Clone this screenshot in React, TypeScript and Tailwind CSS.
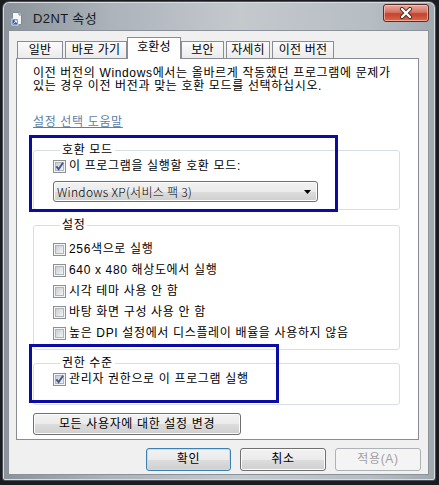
import React from "react";

const tabs = [
  { label: "일반", w: "w-[46px]", gap: "" },
  { label: "바로 가기", w: "w-[62px]", gap: "ml-[2px]" },
  { label: "호환성", w: "w-[54px]", gap: "", active: true },
  { label: "보안", w: "w-[43px]", gap: "" },
  { label: "자세히", w: "w-[44px]", gap: "ml-[2px]" },
  { label: "이전 버전", w: "w-[62px]", gap: "ml-[2px]" },
];

const settings = [
  "256색으로 실행",
  "640 x 480 해상도에서 실행",
  "시각 테마 사용 안 함",
  "바탕 화면 구성 사용 안 함",
  "높은 DPI 설정에서 디스플레이 배율을 사용하지 않음",
];

function CheckBox({ checked }: { checked?: boolean }) {
  return (
    <svg width="13" height="13" viewBox="0 0 13 13" className="shrink-0">
      <defs>
        <linearGradient id="cbFill" x1="0" y1="0" x2="1" y2="1">
          <stop offset="0" stopColor="#c6cbd1" />
          <stop offset="1" stopColor="#f6f6f6" />
        </linearGradient>
      </defs>
      <rect x="0.5" y="0.5" width="12" height="12" fill="#f5f5f5" stroke="#8e8f8f" />
      <rect x="2.5" y="2.5" width="8" height="8" fill="url(#cbFill)" stroke="#b1b5ba" />
      {checked && (
        <path d="M3.4 6.4 L5.6 9.2 L10 2.8" fill="none" stroke="#3f5592" strokeWidth="1.9" />
      )}
    </svg>
  );
}

function CheckRow({ label, checked }: { label: string; checked?: boolean }) {
  return (
    <div className="flex h-[13px] items-center gap-[3px] whitespace-nowrap leading-[13px]">
      <CheckBox checked={checked} />
      <span>{label}</span>
    </div>
  );
}

function WinButton({
  children,
  w,
  isDefault,
  disabled,
}: {
  children: React.ReactNode;
  w: string;
  isDefault?: boolean;
  disabled?: boolean;
}) {
  const base = "flex h-[23px] items-center justify-center rounded-[3px] border leading-[13px]";
  if (disabled) {
    return (
      <div className={`${base} ${w} border-[#adb2b5] bg-[#f4f4f4] text-[#a0a0a0]`}>{children}</div>
    );
  }
  return (
    <div
      className={`${base} ${w} ${
        isDefault
          ? "border-[#3c7fb1] shadow-[inset_0_0_0_1px_#b8e0f6]"
          : "border-[#707070] shadow-[inset_0_0_0_1px_#fcfcfc]"
      } bg-[linear-gradient(to_bottom,#f2f2f2_0%,#ebebeb_50%,#dddddd_51%,#cfcfcf_100%)]`}
    >
      {children}
    </div>
  );
}

export default function App() {
  return (
    <div className="h-[485px] w-[439px] overflow-hidden bg-[#1b1c1f] pl-[2px] pt-[1px] font-['Liberation_Sans','Noto_Sans_CJK_KR',sans-serif] text-[12px] tracking-[0.65px] text-black">
      <div className="flex h-[480px] w-[434px] flex-col rounded-t-[7px] rounded-b-[3px] border border-[#4a5056] bg-[linear-gradient(to_right,#8a929a,#acb3ba_25%,#c4c9ce_55%,#b6bdc3_85%,#a1a9b0)] shadow-[inset_0_0_0_1px_#d8dde2]">
        {/* title bar */}
        <div className="flex h-[28px] shrink-0 items-start">
          <svg width="12" height="15" viewBox="0 0 12 15" className="ml-[8px] mt-[9px]">
            <path d="M1.5 1.5 H8 L10.5 4 V13.5 H1.5 Z" fill="#f4f6f8" stroke="#7d8a96" />
            <path d="M8 1.5 V4 H10.5" fill="#dfe4e8" stroke="#7d8a96" />
            <rect x="1" y="8" width="6" height="6" fill="#2c5bb8" stroke="#f8f8f8" strokeWidth="0.8" />
            <path d="M2.6 12.6 L5.3 9.9 M3.6 9.7 H5.5 V11.6" fill="none" stroke="#ffffff" strokeWidth="1" />
          </svg>
          <span className="ml-[10px] mt-[9px] text-[13px] leading-[15px] tracking-[0.4px] text-[#16191c]">
            D2NT 속성
          </span>
          <div className="ml-auto mr-[6px] mt-[2px] flex h-[18px] w-[46px] items-center justify-center rounded-[3px] border border-[#5b2b25] bg-[linear-gradient(to_bottom,#e9a99b_0%,#d47563_45%,#c2432c_55%,#d8684d_100%)] shadow-[inset_0_0_0_1px_rgba(255,210,200,0.6)]">
            <svg width="14" height="12" viewBox="0 0 14 12">
              <path d="M3 2 L11 10 M11 2 L3 10" stroke="#4a2620" strokeWidth="4" strokeLinecap="round" />
              <path d="M3 2 L11 10 M11 2 L3 10" stroke="#ffffff" strokeWidth="2.4" strokeLinecap="round" />
            </svg>
          </div>
        </div>

        {/* dialog face */}
        <div className="ml-[5px] flex h-[445px] w-[421px] flex-col border border-[#8b9299] bg-[#f0f0f0] pl-[7px] pt-[6px]">
          <div className="ml-[1px] flex h-[21px] items-end tracking-[0.2px]">
            {tabs.map((t) =>
              t.active ? (
                <div
                  key={t.label}
                  className={`relative z-10 mb-[-1px] flex h-[22px] ${t.w} items-start justify-center border border-b-0 border-[#898c95] bg-white pt-[2px] leading-[15px]`}
                >
                  {t.label}
                </div>
              ) : (
                <div
                  key={t.label}
                  className={`${t.gap} flex h-[17px] ${t.w} items-center justify-center border border-b-0 border-[#898c95] bg-[linear-gradient(to_bottom,#fbfbfb,#ebebeb)] leading-[15px]`}
                >
                  {t.label}
                </div>
              )
            )}
          </div>

          {/* tab page */}
          <div className="relative h-[382px] w-[403px] border border-[#898c95] bg-white pt-[8px]">
            <p className="ml-[16px] whitespace-nowrap leading-[13px]">
              이전 버전의 Windows에서는 올바르게 작동했던 프로그램에 문제가
              <br />
              있는 경우 이전 버전과 맞는 호환 모드를 선택하십시오.
            </p>
            <div className="ml-[16px] mt-[23px] leading-[13px]">
              <span className="text-[#5d7fa6] underline decoration-[#5d7fa6]">설정 선택 도움말</span>
            </div>

            <fieldset className="ml-[16px] mt-[15px] w-[367px] rounded-[3px] border border-[#d5dfe5] pb-[7px] pl-[19px]">
              <legend className="ml-[7px] px-[2px] leading-[13px]">호환 모드</legend>
              <div className="mt-[3px]">
                <CheckRow label="이 프로그램을 실행할 호환 모드:" checked />
              </div>
              <div className="mt-[8px] flex h-[21px] w-[265px] items-center justify-between rounded-[3px] border border-[#707070] bg-[linear-gradient(to_bottom,#f2f2f2_0%,#ebebeb_50%,#dddddd_51%,#cfcfcf_100%)] pl-[3px] pr-[6px] shadow-[inset_0_0_0_1px_#fcfcfc]">
                <span className="font-['Noto_Sans_CJK_KR','Liberation_Sans',sans-serif] font-light leading-[13px] tracking-[0.3px]">
                  Windows XP(서비스 팩 3)
                </span>
                <svg width="7" height="4" viewBox="0 0 7 4">
                  <path d="M0 0 H7 L3.5 4 Z" fill="#000000" />
                </svg>
              </div>
            </fieldset>

            <fieldset className="ml-[16px] mt-[9px] w-[367px] rounded-[3px] border border-[#d5dfe5] pb-[9px] pl-[19px]">
              <legend className="ml-[7px] px-[2px] leading-[13px]">설정</legend>
              <div className="mt-[11px] flex flex-col gap-[8px]">
                {settings.map((s) => (
                  <CheckRow key={s} label={s} />
                ))}
              </div>
            </fieldset>

            <fieldset className="ml-[16px] mt-[7px] w-[367px] rounded-[3px] border border-[#d5dfe5] pb-[18px] pl-[19px]">
              <legend className="ml-[7px] px-[2px] leading-[13px]">권한 수준</legend>
              <div className="mt-[3px]">
                <CheckRow label="관리자 권한으로 이 프로그램 실행" checked />
              </div>
            </fieldset>

            <div className="ml-[16px] mt-[8px]">
              <div className="flex h-[22px] w-[208px] items-center justify-center rounded-[3px] border border-[#707070] bg-[linear-gradient(to_bottom,#f2f2f2_0%,#ebebeb_50%,#dddddd_51%,#cfcfcf_100%)] leading-[13px] shadow-[inset_0_0_0_1px_#fcfcfc]">
                모든 사용자에 대한 설정 변경
              </div>
            </div>

            {/* highlight frames drawn over the page */}
            <div className="pointer-events-none absolute left-[12px] top-[76px] h-[77px] w-[309px] border-[3px] border-[#0b0ba6]" />
            <div className="pointer-events-none absolute left-[12px] top-[285px] h-[59px] w-[250px] border-[3px] border-[#0b0ba6]" />
          </div>

          {/* OK / Cancel / Apply */}
          <div className="mt-[8px] flex pr-[7px]">
            <div className="ml-auto flex gap-[9px]">
              <WinButton w="w-[85px]" isDefault>
                확인
              </WinButton>
              <WinButton w="w-[86px]">취소</WinButton>
              <WinButton w="w-[86px]" disabled>
                적용(A)
              </WinButton>
            </div>
          </div>
        </div>
      </div>
    </div>
  );
}
